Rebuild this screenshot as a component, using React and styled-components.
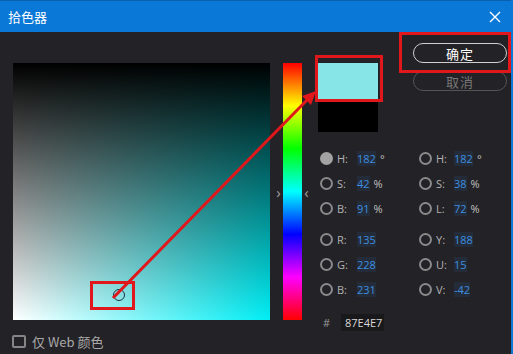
import styled, { createGlobalStyle } from 'styled-components'

const GlobalStyle = createGlobalStyle`
  html, body {
    margin: 0;
    padding: 0;
    background: #232226;
  }
  * {
    box-sizing: border-box;
  }
`

const Window = styled.div`
  position: relative;
  width: 513px;
  height: 354px;
  overflow: hidden;
  background: #232226;
  border-right: 2px solid #0b78d6;
  font-family: "Open Sans", "Noto Sans CJK SC", sans-serif;
`

const TitleBar = styled.div`
  height: 32px;
  background: #0a78d6;
  border-top: 1px solid #0a5fae;
  display: flex;
  align-items: center;
  justify-content: space-between;
  padding: 0 9px 0 8px;
  color: #fff;
  font-family: "Noto Sans CJK SC", sans-serif;
  font-size: 13px;
`

const CloseButton = styled.div`
  width: 14px;
  height: 14px;
  display: flex;
  align-items: center;
  justify-content: center;
`

const Body = styled.div`
  display: flex;
  height: 322px;
`

const LeftColumn = styled.div`
  padding: 31px 0 0 13px;
  display: flex;
  flex-direction: column;
`

const Field = styled.div`
  position: relative;
  width: 257px;
  height: 257px;
  background:
    linear-gradient(to top, rgba(0, 0, 0, 0), #000),
    linear-gradient(to right, #fff, #00eef4);
`

const Marker = styled.div`
  position: absolute;
  left: 100px;
  top: 226px;
  width: 12px;
  height: 12px;
  border-radius: 50%;
  border: 1.5px solid #1b3440;
`

const WebOnly = styled.label`
  display: flex;
  align-items: center;
  gap: 6px;
  margin: 12px 0 0 -1px;
  color: #a9a9a9;
  font-family: "Noto Sans CJK SC", sans-serif;
  font-size: 13px;
`

const CheckBox = styled.span`
  width: 14px;
  height: 13px;
  border: 2px solid #858585;
  border-radius: 2px;
`

const HueArea = styled.div`
  display: flex;
  align-items: center;
  height: 257px;
  margin: 31px 0 0 4px;
  color: #a0a0a0;
  font-size: 15px;
`

const HueArrow = styled.span`
  width: 9px;
  text-align: center;
  line-height: 1;
  margin-top: 2px;
`

const HueBar = styled.div`
  width: 19px;
  height: 257px;
  background: linear-gradient(to bottom, #f00, #ff0, #0f0, #0ff, #00f, #f0f, #f00);
`

const RightPanel = styled.div`
  padding: 11px 0 0 7px;
  display: flex;
  flex-direction: column;
`

const TopRow = styled.div`
  display: flex;
`

const SwatchColumn = styled.div`
  width: 60px;
  margin-top: 20px;
  display: flex;
  flex-direction: column;
`

const Swatch = styled.div`
  height: ${p => p.$h}px;
  background: ${p => p.$color};
`

const ButtonColumn = styled.div`
  width: 94px;
  margin-left: 35px;
  display: flex;
  flex-direction: column;
  gap: 8px;
`

const PillButton = styled.div`
  height: 20px;
  border-radius: 10px;
  border: 1px solid ${p => (p.$primary ? '#cfcfcf' : '#555')};
  color: ${p => (p.$primary ? '#fff' : '#777')};
  display: flex;
  align-items: center;
  justify-content: center;
  font-family: "Noto Sans CJK SC", sans-serif;
  font-size: 13px;
  letter-spacing: 1px;
`

const Fields = styled.div`
  display: grid;
  grid-template-columns: 99px 99px;
  margin: 14px 0 0 2px;
`

const FieldColumn = styled.div`
  display: flex;
  flex-direction: column;
`

const Group = styled.div`
  display: flex;
  flex-direction: column;
  & + & {
    margin-top: 6px;
  }
`

const Row = styled.div`
  height: 25px;
  display: flex;
  align-items: center;
  font-size: 11px;
`

const Radio = styled.span`
  width: 13px;
  height: 13px;
  border-radius: 50%;
  border: 2px solid ${p => (p.$checked ? '#a3a3a3' : '#8a8a8a')};
  background: ${p => (p.$checked ? '#a3a3a3' : 'transparent')};
`

const Label = styled.span`
  width: ${p => p.$w}px;
  margin-left: 4px;
  color: #b3b3b3;
`

const Value = styled.span`
  color: #3d8fe0;
  background: rgba(40, 62, 95, 0.35);
`

const Unit = styled.span`
  margin-left: 4px;
  color: #c0c0c0;
`

const HexRow = styled.div`
  display: flex;
  align-items: center;
  margin: 12px 0 0 5px;
  font-size: 11px;
`

const Hash = styled.span`
  color: #9a9a9a;
  width: 18px;
`

const HexInput = styled.div`
  width: 43px;
  height: 17px;
  background: #19181b;
  color: #d8d8d8;
  display: flex;
  align-items: center;
  padding-left: 4px;
  font-size: 11px;
`

const Annotations = styled.svg`
  position: absolute;
  left: 0;
  top: 0;
  pointer-events: none;
`

const leftFields = [
  [
    { label: 'H:', value: '182', unit: '°', checked: true },
    { label: 'S:', value: '42', unit: '%' },
    { label: 'B:', value: '91', unit: '%' },
  ],
  [
    { label: 'R:', value: '135' },
    { label: 'G:', value: '228' },
    { label: 'B:', value: '231' },
  ],
]

const rightFields = [
  [
    { label: 'H:', value: '182', unit: '°' },
    { label: 'S:', value: '38', unit: '%' },
    { label: 'L:', value: '72', unit: '%' },
  ],
  [
    { label: 'Y:', value: '188' },
    { label: 'U:', value: '15' },
    { label: 'V:', value: '-42' },
  ],
]

const FieldList = ({ groups, labelWidth }) => (
  <FieldColumn>
    {groups.map((group, gi) => (
      <Group key={gi}>
        {group.map(item => (
          <Row key={item.label + item.value}>
            <Radio $checked={item.checked} />
            <Label $w={labelWidth}>{item.label}</Label>
            <Value>{item.value}</Value>
            {item.unit && <Unit>{item.unit}</Unit>}
          </Row>
        ))}
      </Group>
    ))}
  </FieldColumn>
)

const App = () => {
  return (
    <>
      <GlobalStyle />
      <Window>
        <TitleBar>
          <span>拾色器</span>
          <CloseButton>
            <svg width="12" height="12" viewBox="0 0 12 12">
              <path d="M1 1 L11 11 M11 1 L1 11" stroke="#fff" strokeWidth="1.4" />
            </svg>
          </CloseButton>
        </TitleBar>

        <Body>
          <LeftColumn>
            <Field>
              <Marker />
            </Field>
            <WebOnly>
              <CheckBox />
              仅 Web 颜色
            </WebOnly>
          </LeftColumn>

          <HueArea>
            <HueArrow>›</HueArrow>
            <HueBar />
            <HueArrow>‹</HueArrow>
          </HueArea>

          <RightPanel>
            <TopRow>
              <SwatchColumn>
                <Swatch $h={37} $color="#87e4e7" />
                <Swatch $h={32} $color="#000" />
              </SwatchColumn>
              <ButtonColumn>
                <PillButton $primary>确定</PillButton>
                <PillButton>取消</PillButton>
              </ButtonColumn>
            </TopRow>

            <Fields>
              <FieldList groups={leftFields} labelWidth={20} />
              <FieldList groups={rightFields} labelWidth={18} />
            </Fields>

            <HexRow>
              <Hash>#</Hash>
              <HexInput>87E4E7</HexInput>
            </HexRow>
          </RightPanel>
        </Body>

        <Annotations width="513" height="354" viewBox="0 0 513 354">
          <g fill="none" stroke="#e0171b" strokeWidth="3">
            <rect x="316.5" y="56.5" width="65" height="44" />
            <rect x="400.5" y="33.5" width="109" height="38" />
            <rect x="91.5" y="282.5" width="42" height="26" />
            <line x1="113" y1="298" x2="309" y2="98" />
          </g>
          <polygon points="316,91 311,105 302,96" fill="#e0171b" />
        </Annotations>
      </Window>
    </>
  )
}

export default App
